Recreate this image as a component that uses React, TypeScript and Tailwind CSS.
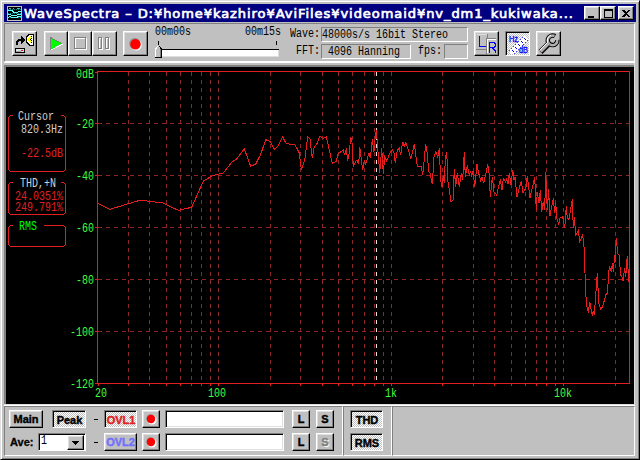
import React from 'react';

type Trace = { x: number; y: number; pts: number[][] };

// Spectrum samples, stored as thirds of a pixel from each segment's origin.
const TRACES: Trace[] = [
  { x: 90, y: 110, pts: [[22,280],[60,298],[115,281],[150,271],[180,274],[218,279],[265,301],[305,292],[340,213],[370,196],[400,189],[425,157],[440,147],[463,116],[482,169],[497,162],[512,133],[527,89],[540,94]] },
  { x: 260, y: 110, pts: [[31,94],[43,118],[55,107],[68,80],[77,99],[95,105],[105,104],[118,129],[124,179],[134,150],[143,80],[150,88],[157,145],[163,110],[172,100],[179,79],[190,85],[199,80],[217,160],[228,155],[234,131],[250,120],[254,136],[259,115],[263,153],[268,128],[272,80],[276,97],[280,168],[288,153],[292,152],[296,163],[299,110],[308,181],[313,150],[317,163],[327,128],[331,145],[337,88],[342,125],[346,78],[349,60],[352,100],[359,188],[365,115],[370,192],[374,140],[380,153],[388,133],[397,118],[402,128],[406,160],[412,120],[418,115],[422,136],[428,95],[433,109],[437,98],[447,125],[452,148],[463,103],[472,168],[482,171]] },
  { x: 420, y: 130, pts: [[4,110],[8,136],[17,43],[22,70],[26,125],[30,130],[37,163],[42,80],[47,65],[53,82],[58,55],[62,150],[66,170],[70,138],[73,160],[76,88],[80,65],[84,155],[93,215],[99,210],[103,118],[107,172],[112,128],[118,170],[124,130],[128,150],[133,65],[136,140],[142,105],[148,135],[152,125],[155,140],[159,123],[164,170],[171,103],[176,130],[182,152],[186,142],[191,160],[203,105],[206,112],[211,200],[217,140],[222,185],[230,195],[241,148],[246,180],[250,145],[257,157],[260,148],[264,162],[268,128],[273,165],[278,120],[282,150],[285,142],[291,200],[304,152],[309,190],[314,178],[317,180],[322,138],[330,203],[344,142],[349,240],[352,185],[357,220],[361,180],[365,245],[370,215],[374,240],[377,127],[382,240],[386,178],[389,255]] },
  { x: 530, y: 170, pts: [[60,137],[66,105],[70,85],[74,130],[77,95],[80,145],[86,163],[90,143],[98,140],[104,175],[109,107],[112,145],[117,148],[123,110],[127,87],[130,175],[133,142],[137,195],[145,182],[149,215],[158,195],[162,230],[165,310],[169,400],[175,428],[179,395],[187,438],[190,423],[193,435],[202,308],[206,400],[212,417],[218,410],[227,375],[232,370],[238,287],[244,305],[247,280],[250,305],[254,255],[256,275],[259,203],[263,250],[267,255],[272,315],[276,320],[279,333],[284,293],[287,322],[292,257],[296,335]] },
];

const SPECTRUM = TRACES.flatMap((t) => t.pts.map(([a, b]) => `${(t.x + a / 3).toFixed(1)},${(t.y + b / 3).toFixed(1)}`)).join(' ');

const V_LINES = [128,149,166,180,191,201,210,218,270,300,322,338,352,364,374,383,391,442,473,494,511,525,536,546,555,563,615];
const H_LINES = [123, 175, 227, 279, 331];

const raised = 'border border-t-white border-l-white border-b-black border-r-black shadow-[inset_-1px_-1px_0_#808080,inset_1px_1px_0_#dfdfdf]';
const sunken = 'border border-t-[#808080] border-l-[#808080] border-b-white border-r-white shadow-[inset_1px_1px_0_#000]';
const dither = 'bg-[conic-gradient(#fff_25%,#c0c0c0_0_50%,#fff_0_75%,#c0c0c0_0)] bg-[length:2px_2px]';
const panel = 'border-t border-l border-[#808080] border-r-white border-b-white border-r border-b';

function Gothic({ x, y, w, fill = '#000', children }: { x: number; y: number; w: number; fill?: string; children: string }) {
  return (
    <text transform={`translate(${x} ${y}) scale(1 1.25)`} textLength={w} lengthAdjust="spacing" fill={fill} fontSize="10" fontFamily="'Liberation Mono', monospace" xmlSpace="preserve">
      {children}
    </text>
  );
}

function Mono({ className = '', children }: { className?: string; children: React.ReactNode }) {
  return <span className={`block origin-top scale-y-125 whitespace-pre font-['Liberation_Mono',monospace] text-[10px] leading-[10px] ${className}`}>{children}</span>;
}

function ToolButton({ className = '', down = false, children }: { className?: string; down?: boolean; children: React.ReactNode }) {
  return (
    <button className={`block h-[25px] shrink-0 ${down ? `${sunken} ${dither}` : `${raised} bg-[#c0c0c0]`} ${className}`}>
      <svg className="block" width="23" height="23" viewBox="0 0 23 23" shapeRendering="crispEdges">{children}</svg>
    </button>
  );
}

function TextButton({ className = '', down = false, children }: { className?: string; down?: boolean; children: React.ReactNode }) {
  return (
    <button className={`flex h-[18px] shrink-0 items-center justify-center font-['Liberation_Sans',sans-serif] text-[11px] leading-none font-bold [-webkit-text-stroke:0.4px] ${down ? `${sunken} ${dither} pt-[2px] pl-px` : `${raised} bg-[#c0c0c0]`} ${className}`}>
      {children}
    </button>
  );
}

function RecordButton() {
  return (
    <button className={`ml-[5px] block h-[18px] w-[18px] shrink-0 bg-[#c0c0c0] ${raised}`}>
      <svg className="block" width="16" height="16">
        <circle cx="9" cy="9" r="4.500" fill="#fff" /><circle cx="7.500" cy="7.500" r="4.300" fill="#909090" /><circle cx="8" cy="8" r="4.200" fill="#f00" />
      </svg>
    </button>
  );
}

function TitleBar() {
  const caption = 'flex h-[14px] w-[16px] items-center justify-center bg-[#c0c0c0]';
  return (
    <div className="flex h-[18px] items-center bg-[#000080] pr-[2px] pl-[3px]">
      <svg className="shrink-0" width="15" height="15" shapeRendering="crispEdges">
        <rect width="15" height="15" fill="#c0c0c0" /><rect x="1" y="1" width="13" height="13" fill="#000" />
        <path d="M1 3.5h13M1 7.5h13M1 11.5h13" stroke="#008080" strokeDasharray="1 1" />
        <path d="M1 4.5h4l2 2h3l2 -1h2M1 8.5h2l2 1h4l2 -1h3M1 12l2-2 2 2 2-1 2 1 3-2 2 1" fill="none" stroke="#60ffff" />
        <path d="M2 2.5h2M6 2.5h1M10 2.5h3" stroke="#40c0c0" />
      </svg>
      <svg className="block shrink-0" width="555" height="18">
        <text x="2" y="14" textLength="549" lengthAdjust="spacing" fill="#fff" stroke="#fff" strokeWidth="0.7" fontSize="13" fontFamily="'DejaVu Sans',sans-serif" xmlSpace="preserve">WaveSpectra – D:¥home¥kazhiro¥AviFiles¥videomaid¥nv_dm1_kukiwaka...</text>
      </svg>
      <div className="ml-auto flex">
        <button className={`${caption} ${raised}`}><span className="mt-[7px] mr-[2px] block h-[2px] w-[6px] bg-black" /></button>
        <button className={`${caption} ${raised}`}><span className="block h-[9px] w-[9px] border border-t-2 border-black" /></button>
        <button className={`ml-[2px] ${caption} ${raised}`}>
          <svg width="8" height="7" shapeRendering="crispEdges"><path d="M0 0h2l2 2 2-2h2L5 3.5 8 7H6L4 5 2 7H0l3-3.5z" /></svg>
        </button>
      </div>
    </div>
  );
}

function PositionSlider() {
  return (
    <div className="ml-[7px] flex h-[35px] w-[126px] shrink-0 flex-col">
      <div className="flex h-[17px] justify-between pt-[2px]">
        <Mono>00m00s</Mono><Mono>00m15s</Mono>
      </div>
      <svg className="block" width="126" height="18" shapeRendering="crispEdges">
        <path d="M3.5 0v4M121.5 0v4" stroke="#000" />
        <path d="M6 8h118v8H6z" fill="#fff" /><path d="M6 8.5h118" stroke="#000" />
        <path d="M6 15.5h117.500V9" stroke="#dfdfdf" fill="none" />
        <path d="M0 17V8l3-4 4 4v9z" fill="#c0c0c0" /><path d="M.5 17V8L3 5" stroke="#fff" fill="none" /><path d="M0 16.500h6.500V8L4 5" stroke="#000" fill="none" /><path d="M5.500 16V8" stroke="#808080" />
      </svg>
    </div>
  );
}

function Info() {
  const well = 'flex h-[15px] items-start border border-t-[#808080] border-l-[#808080] border-b-white border-r-white';
  return (
    <div className="ml-[9px] flex w-[178px] shrink-0 flex-col gap-[2px] pt-[3px]">
      <div className="flex h-[15px]">
        <Mono className="w-[31px] pt-px">Wave:</Mono>
        <div className={`${well} w-[147px] pt-px`}><Mono>48000s/s 16bit Stereo</Mono></div>
      </div>
      <div className="flex h-[15px]">
        <Mono className="w-[31px] pt-px pl-[6px]">FFT:</Mono>
        <div className={`${well} w-[90px] pt-px pl-[6px]`}><Mono>4096 Hanning</Mono></div>
        <Mono className="w-[33px] pt-px pl-[7px]">fps:</Mono>
        <div className={`${well} w-[24px]`} />
      </div>
    </div>
  );
}

function Toolbar() {
  return (
    <div className={`mt-px flex h-[39px] pl-[7px] ${panel}`}>
      <ToolButton className="mt-[7px] w-[25px]">
        <path d="M4 13V10l2-2h4" stroke="#000" strokeWidth="2" fill="none" /><path d="M8 4l4 4-4 4z" />
        <path d="M13.500 5l3-3h4v11h-4l-3-3z" fill="#fff" stroke="#000" /><path d="M18 4v7l-4-3.500z" fill="#ffff00" /><path d="M18.500 4v7M17 7.500h2" stroke="#000" strokeDasharray="1 1" />
        <path d="M2.500 16.500h9v4h-9z" fill="#dfdfdf" stroke="#000" /><path d="M3 19.500h5" stroke="#a0a0a0" /><path d="M8 18.500h2" stroke="#f00" />
      </ToolButton>
      <div className="mt-[7px] ml-[7px] flex">
        <ToolButton className="w-[24px]"><path d="M18 12L6 18" stroke="#fff" /><path d="M5 5l12 6.500L5 18z" fill="#0f0" /><path d="M5.500 18V5.500L17 11.500" stroke="#808080" fill="none" /></ToolButton>
        <ToolButton className="w-[24px]"><path d="M6.500 6.500h11v11h-11z" fill="none" stroke="#fff" /><path d="M5.500 5.500h11v11h-11z" fill="none" stroke="#808080" /></ToolButton>
        <ToolButton className="w-[25px]"><path d="M6.500 6.500h3v11h-3zM13.500 6.500h3v11h-3z" fill="none" stroke="#fff" /><path d="M5.500 5.500h3v11h-3zM12.500 5.500h3v11h-3z" fill="none" stroke="#808080" /></ToolButton>
      </div>
      <ToolButton className="mt-[7px] ml-[6px] w-[25px]"><g shapeRendering="auto"><circle cx="12.300" cy="13" r="5.600" fill="#fff" /><circle cx="10.800" cy="11.500" r="5.500" fill="#909090" /><circle cx="11.500" cy="12.200" r="5.200" fill="#f00" /></g></ToolButton>
      <PositionSlider />
      <Info />
      <ToolButton className="mt-[7px] ml-[6px] w-[25px]">
        <path d="M1 17.500h10M12.500 2v4" stroke="#808080" /><path d="M2 2.500h10" stroke="#dfdfdf" />
        <path d="M11.500 22V6.500H21" stroke="#808080" fill="none" /><path d="M12.500 21V7.500H21" stroke="#fff" fill="none" />
        <path d="M4.500 4v10.500H11" stroke="#0000ff" fill="none" />
        <path d="M14.500 21V10.500H19l1 1v3l-1 1h-4M17 15.500l3 3V21" stroke="#0000ff" fill="none" />
      </ToolButton>
      <ToolButton down className="mt-[7px] ml-[6px] w-[25px]">
        <path d="M3 18L18 4l4 4L8 22H5z" fill="#fff" />
        <path d="M3 19L18 4M8 22L22 8" fill="none" stroke="#4040ff" strokeDasharray="1.500 1.500" />
        <path d="M6 18l2 2M9 15l2 2M12 12l2 2M15 9l2 2M18 6l2 2" stroke="#0000ff" />
        <text x="3" y="10" fontSize="9" fill="#0000ff" stroke="#0000ff" strokeWidth="0.3" fontFamily="'Liberation Sans',sans-serif" textLength="9" lengthAdjust="spacingAndGlyphs">Hz</text>
        <text x="13" y="21" fontSize="8.500" fill="#0000ff" stroke="#0000ff" strokeWidth="0.3" fontFamily="'Liberation Sans',sans-serif" textLength="9" lengthAdjust="spacingAndGlyphs">dB</text>
      </ToolButton>
      <ToolButton className="mt-[7px] ml-[6px] w-[25px]">
        <g fill="none" shapeRendering="auto">
          <path d="M3.500 20L12 11.500" stroke="#000" strokeWidth="5.500" />
          <path d="M18 4.200A4.800 4.800 0 1 0 20.300 8" stroke="#000" strokeWidth="4.500" />
          <path d="M3.500 19.500L12 11" stroke="#b0b0b0" strokeWidth="3.500" />
          <path d="M17.500 4A4.800 4.800 0 1 0 20.300 8" stroke="#b0b0b0" strokeWidth="2.500" />
          <path d="M2.500 18.500L10.500 10.500Q9.500 5 14 3" stroke="#fff" />
          <path d="M5 20l8-8" stroke="#808080" />
        </g>
      </ToolButton>
    </div>
  );
}

function Readout({ d, children }: { d: string; children: React.ReactNode }) {
  return <g><path d={d} fill="none" stroke="#e02020" shapeRendering="crispEdges" />{children}</g>;
}

function Spectrum() {
  return (
    <div className="mt-[2px] h-[339px] border-t-2 border-l-2 border-[#808080] bg-black">
      <svg className="block" width="628" height="337" viewBox="6 67 628 337">
        <g shapeRendering="crispEdges" fill="none">
          {V_LINES.map((x) => <g key={x}><path d={`M${x}.5 72V383`} stroke="#902626" strokeDasharray="4 4" /><path d={`M${x}.5 383v3`} stroke="#e02020" /></g>)}
          {H_LINES.map((y) => <g key={y}><path d={`M98 ${y}.5H629`} stroke="#902626" strokeDasharray="4 4" /><path d={`M95 ${y}.5h3`} stroke="#e02020" /></g>)}
          <path d="M376.5 72V383" stroke="#e0e0e0" strokeDasharray="4 4" />
          <path d="M95 72.5h2M95 383.5h2M98.500 383v3M97.500 71.500H629.500V383.500H97.500z" stroke="#e02020" />
          <polyline points={SPECTRUM} stroke="#e81c1c" />
        </g>
        <Gothic x={76} y={78} w={18} fill="#40ff40">0dB</Gothic>
        {[-20, -40, -60, -80].map((v, i) => <Gothic key={v} x={76} y={128 + i * 52} w={18} fill="#40ff40">{String(v)}</Gothic>)}
        <Gothic x={70} y={336} w={24} fill="#40ff40">-100</Gothic>
        <Gothic x={70} y={388} w={24} fill="#40ff40">-120</Gothic>
        <Gothic x={95} y={397} w={12} fill="#40ff40">20</Gothic>
        <Gothic x={208} y={397} w={18} fill="#40ff40">100</Gothic>
        <Gothic x={385} y={397} w={12} fill="#40ff40">1k</Gothic>
        <Gothic x={554} y={397} w={18} fill="#40ff40">10k</Gothic>
        <Readout d="M13 115.500h-2.500l-2 2V169.500l2 2H63.500l2-2V117.500l-2-2H61">
          <Gothic x={18} y={120} w={36} fill="#d0d0d0">Cursor</Gothic>
          <Gothic x={21} y={133} w={42} fill="#d0d0d0">820.3Hz</Gothic>
          <Gothic x={21} y={157} w={42} fill="#e02020">-22.5dB</Gothic>
        </Readout>
        <Readout d="M13 182.500h-2.500l-2 2V212.500l2 2H63.500l2-2V184.500l-2-2H61">
          <Gothic x={20} y={187} w={36} fill="#d0d0d0">THD,+N</Gothic>
          <Gothic x={15} y={200} w={48} fill="#e02020">24.0351%</Gothic>
          <Gothic x={15} y={211} w={48} fill="#e02020">249.791%</Gothic>
        </Readout>
        <Readout d="M13 225.500h-2.500l-2 2V244.500l2 2H63.500l2-2V227.500l-2-2H44">
          <Gothic x={19} y={230} w={18} fill="#00ff00">RMS</Gothic>
        </Readout>
      </svg>
    </div>
  );
}

function Field() {
  return <div className="ml-[5px] h-[18px] w-[119px] shrink-0 border border-t-[#808080] border-l-[#808080] border-r-white border-b-white bg-white shadow-[inset_1px_1px_0_#000,inset_-1px_-1px_0_#dfdfdf]" />;
}

function Controls() {
  return (
    <div className="flex h-[50px]">
      <div className={`flex w-[339px] shrink-0 flex-col gap-[5px] pt-[3px] pl-[4px] ${panel}`}>
        <div className="flex">
          <TextButton className="w-[34px]">Main</TextButton>
          <TextButton down className="ml-[9px] w-[34px]">Peak</TextButton>
          <span className="mt-[9px] ml-[8px] h-px w-[4px] bg-black" />
          <TextButton down className="ml-[6px] w-[33px] text-[#e02020]">OVL1</TextButton>
          <RecordButton /><Field />
          <TextButton className="ml-[8px] w-[18px]">L</TextButton>
          <TextButton className="ml-[6px] w-[18px]">S</TextButton>
        </div>
        <div className="flex">
          <span className="ml-[1px] w-[28px] pt-[3px] font-['Liberation_Sans',sans-serif] text-[11px] leading-[12px] font-bold [-webkit-text-stroke:0.3px]">Ave:</span>
          <div className="flex h-[18px] w-[48px] border border-t-[#808080] border-l-[#808080] border-r-white border-b-white bg-white pt-px pr-px pl-[2px] shadow-[inset_1px_1px_0_#000]">
            <Mono>1</Mono>
            <span className={`ml-auto flex h-[15px] w-[17px] items-center justify-center bg-[#c0c0c0] ${raised}`}>
              <svg width="7" height="4" shapeRendering="crispEdges"><path d="M0 0h7L3.500 4z" /></svg>
            </span>
          </div>
          <span className="mt-[9px] ml-[8px] h-px w-[4px] bg-black" />
          <TextButton className="ml-[6px] w-[33px] text-[#7070ff]">OVL2</TextButton>
          <RecordButton /><Field />
          <TextButton className="ml-[8px] w-[18px]">L</TextButton>
          <TextButton className="ml-[6px] w-[18px] text-[#808080] [text-shadow:1px_1px_0_#fff]">S</TextButton>
        </div>
      </div>
      <div className={`flex w-[49px] shrink-0 flex-col gap-[5px] pt-[3px] pl-[6px] ${panel}`}>
        <TextButton down className="w-[33px]">THD</TextButton>
        <TextButton down className="w-[33px]">RMS</TextButton>
      </div>
      <div className={`flex-1 ${panel}`} />
    </div>
  );
}

export default function App() {
  return (
    <div className="h-[460px] w-[640px] overflow-hidden border border-t-[#dfdfdf] border-l-[#dfdfdf] border-r-black border-b-black bg-[#c0c0c0] px-[3px] pt-[3px] text-black shadow-[inset_1px_1px_0_#fff,inset_-1px_-1px_0_#808080]">
      <TitleBar />
      <div className="flex w-[631px] flex-col">
        <Toolbar />
        <div className="h-px bg-white" />
        <div className="border-r border-b border-[#dfdfdf]"><Spectrum /></div>
        <div className="h-px bg-white" />
        <Controls />
      </div>
    </div>
  );
}
